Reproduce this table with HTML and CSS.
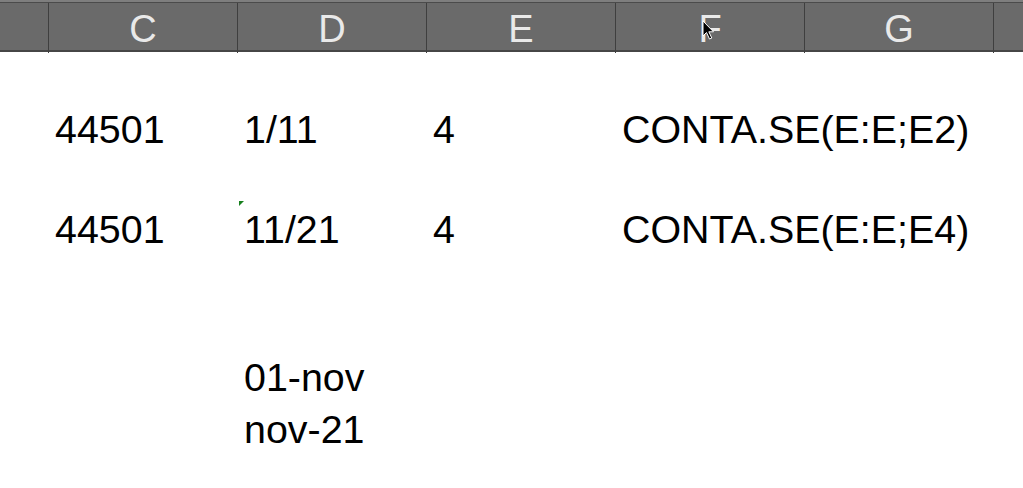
FILE: index.html
```html
<!DOCTYPE html>
<html>
<head>
<meta charset="utf-8">
<link rel="stylesheet" href="styles.css">
</head>
<body>
<div class="sheet">
  <div class="topstrip"></div>
  <div class="colbar">
    <div class="hcell"></div>
    <div class="hcell">C</div>
    <div class="hcell">D</div>
    <div class="hcell">E</div>
    <div class="hcell hcell-f">F
      <svg class="cursor" width="13" height="21" viewBox="0 0 13 21"><path d="M1 1 L1 16 L4.5 12.5 L7.5 19 L9.8 18 L6.8 11.8 L11.5 11.8 Z" fill="#000" stroke="#fff" stroke-width="1"/></svg>
    </div>
    <div class="hcell">G</div>
    <div class="hcell"></div>
  </div>
  <div class="grid">
    <div class="row r-gap1"></div>
    <div class="row r-data">
      <div class="cell"></div>
      <div class="cell">44501</div>
      <div class="cell">1/11</div>
      <div class="cell">4</div>
      <div class="cell">CONTA.SE(E:E;E2)</div>
      <div class="cell"></div>
      <div class="cell"></div>
    </div>
    <div class="row r-gap2"></div>
    <div class="row r-data">
      <div class="cell"></div>
      <div class="cell">44501</div>
      <div class="cell flagged"><span class="err"></span>11/21</div>
      <div class="cell">4</div>
      <div class="cell">CONTA.SE(E:E;E4)</div>
      <div class="cell"></div>
      <div class="cell"></div>
    </div>
    <div class="row r-gap3"></div>
    <div class="row r-data r-tall">
      <div class="cell"></div>
      <div class="cell"></div>
      <div class="cell">01-nov</div>
      <div class="cell"></div>
      <div class="cell"></div>
      <div class="cell"></div>
      <div class="cell"></div>
    </div>
    <div class="row r-data">
      <div class="cell"></div>
      <div class="cell"></div>
      <div class="cell">nov-21</div>
      <div class="cell"></div>
      <div class="cell"></div>
      <div class="cell"></div>
      <div class="cell"></div>
    </div>
  </div>
</div>
</body>
</html>
```

FILE: styles.css
```css
html, body {
  margin: 0;
  padding: 0;
  background: #ffffff;
}
body {
  width: 1023px;
  height: 488px;
  overflow: hidden;
  font-family: "Liberation Sans", Arial, sans-serif;
}
.sheet {
  display: flex;
  flex-direction: column;
}
.topstrip {
  height: 2px;
  background: #7e7e7e;
}
.colbar {
  display: grid;
  grid-template-columns: 49px repeat(5, 189px) 1fr;
  height: 47px;
  background: #6a6a6a;
  border-top: 1px solid #4b4b4b;
  border-bottom: 2px solid #464646;
}
.hcell {
  position: relative;
  border-right: 1px solid #3f3f3f;
  color: #e9e9e9;
  font-size: 38px;
  line-height: 47px;
  padding-top: 3px;
  text-align: center;
  overflow: visible;
  box-sizing: border-box;
}
.hcell:last-child {
  border-right: none;
}
.cursor {
  position: absolute;
  left: 86px;
  top: 17px;
}
.grid {
  display: flex;
  flex-direction: column;
}
.row {
  display: grid;
  grid-template-columns: 49px repeat(5, 189px) 1fr;
}
.r-gap1 { height: 52px; }
.r-gap2 { height: 50px; }
.r-gap3 { height: 98px; }
.r-data {
  height: 50px;
  line-height: 50px;
  font-size: 39.4px;
  color: #000;
}
.r-tall { height: 52px; }
.cell {
  position: relative;
  padding-left: 6px;
  white-space: nowrap;
}
.err {
  position: absolute;
  left: 1px;
  top: -3px;
  width: 0;
  height: 0;
  border-top: 5px solid #17801e;
  border-right: 5px solid transparent;
}
```
